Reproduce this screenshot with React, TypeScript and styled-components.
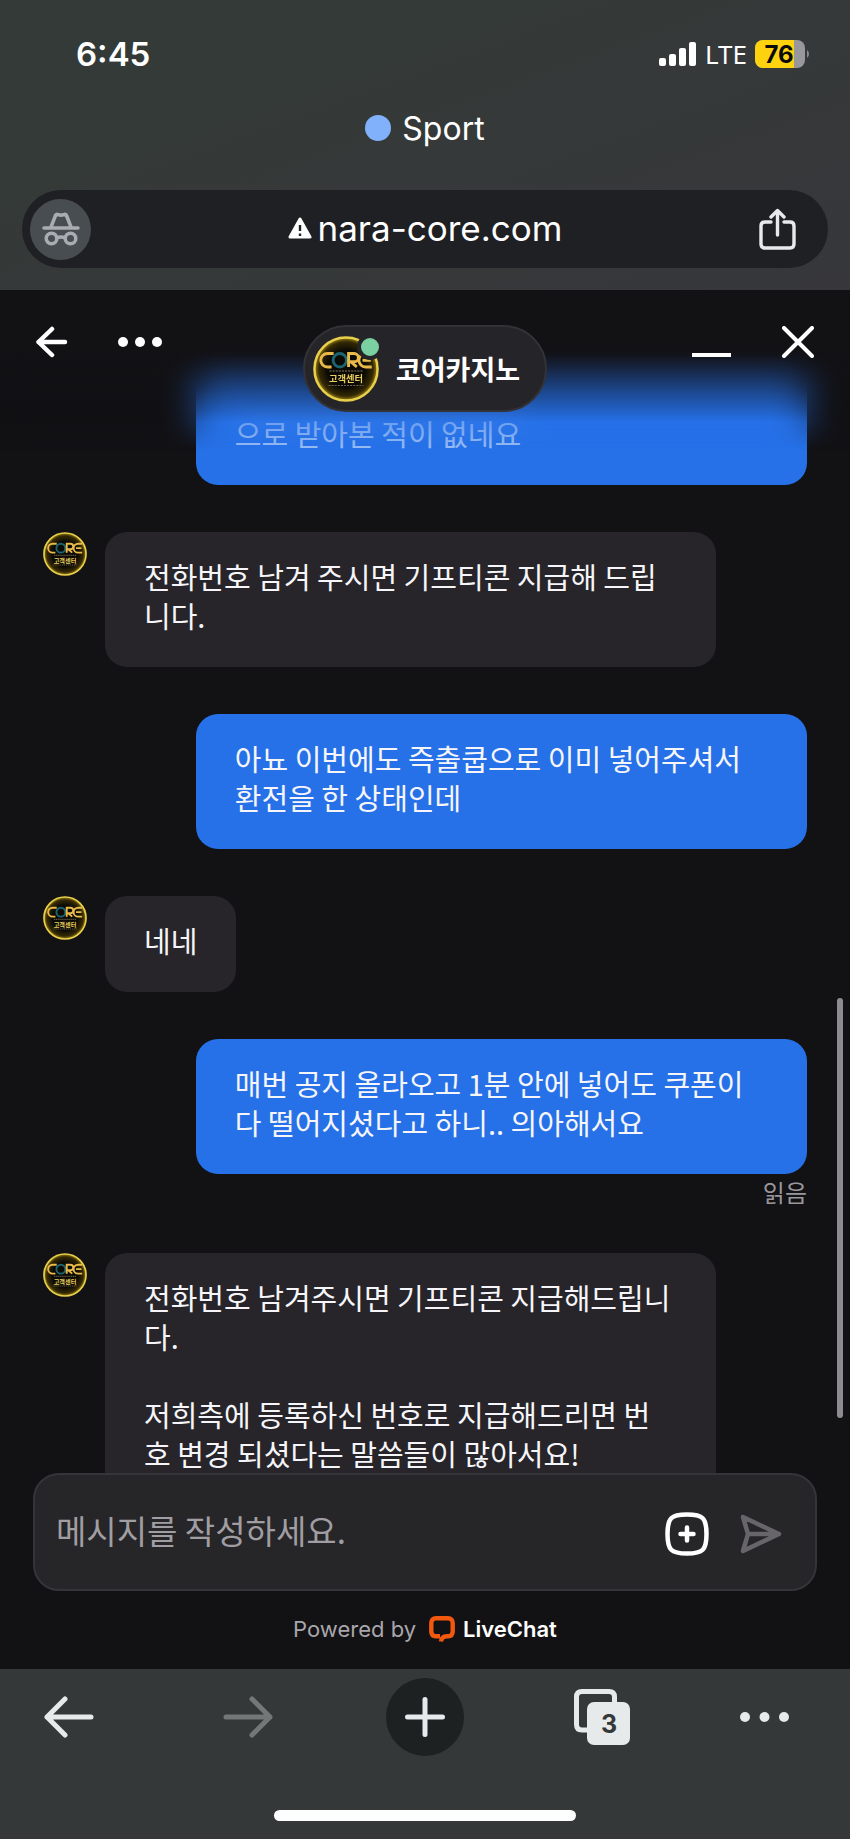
import React from "react";
import styled, { createGlobalStyle, css } from "styled-components";

const GlobalStyle = createGlobalStyle`
  *, *::before, *::after { box-sizing: border-box; }
  html, body { margin: 0; height: 100%; background: #343838; }
  #root { height: 100%; }
  body {
    font-family: Inter, "Noto Sans CJK KR", sans-serif;
    color: #fff;
    overflow: hidden;
  }
  button { border: 0; padding: 0; margin: 0; background: none; color: inherit; font: inherit; cursor: pointer; }
  a { color: inherit; text-decoration: none; }
  svg { display: block; }
`;

const Screen = styled.div`
  display: flex;
  flex-direction: column;
  min-height: 100%;
  height: 100vh;
`;

const BrowserTop = styled.header`
  flex: none;
  height: 290px;
  padding: 0 22px;
  display: flex;
  flex-direction: column;
  background: linear-gradient(160deg, #343a38 30%, #37373b 100%);
`;

const StatusBar = styled.div`
  display: flex;
  justify-content: space-between;
  align-items: center;
  height: 68px;
  margin-top: 20px;
  padding: 0 18px 0 54px;
`;

const Clock = styled.time`
  font-size: 33px;
  font-weight: 600;
  line-height: 40px;
`;

const StatusRight = styled.div`
  display: flex;
  align-items: center;
  gap: 8px;
`;

const Network = styled.span`
  font-family: "Noto Sans", sans-serif;
  font-size: 26px;
  line-height: 32px;
`;

const TabGroup = styled.div`
  display: flex;
  align-items: center;
  justify-content: center;
  gap: 11px;
  margin-top: 20px;
  height: 40px;
  font-size: 32px;
`;

const GroupDot = styled.span`
  width: 26px;
  height: 26px;
  border-radius: 50%;
  background: #82b1fc;
`;

const AddressBar = styled.div`
  display: flex;
  align-items: center;
  justify-content: space-between;
  margin-top: 42px;
  height: 78px;
  padding: 0 32px 0 8px;
  border-radius: 39px;
  background: #1f2024;
`;

const Incognito = styled.button`
  display: grid;
  place-items: center;
  width: 61px;
  height: 61px;
  border-radius: 50%;
  background: #484d51;
`;

const Address = styled.button`
  display: flex;
  align-items: center;
  gap: 6px;
  padding-bottom: 2px;
  font-size: 35px;
  line-height: 42px;
`;

const Chat = styled.main`
  position: relative;
  flex: 1;
  min-height: 0;
  display: flex;
  flex-direction: column;
  background: #121114;
`;

const ChatHeader = styled.div`
  position: absolute;
  z-index: 2;
  top: 0;
  left: 0;
  right: 0;
  display: grid;
  grid-template-columns: 1fr auto 1fr;
  align-items: start;
  padding: 35px 36px 0;
`;

const HeaderActions = styled.div<{ $end?: boolean }>`
  display: flex;
  align-items: center;
  justify-content: ${(p) => (p.$end ? "flex-end" : "flex-start")};
  gap: ${(p) => (p.$end ? "51px" : "50px")};
  height: 34px;
`;

const AgentPill = styled.div`
  display: flex;
  align-items: center;
  gap: 17px;
  height: 87px;
  padding: 0 25px 0 8px;
  border: 2px solid #333236;
  border-radius: 44px;
  background: #252428;
  font-family: "Noto Sans CJK KR", sans-serif;
  font-size: 27px;
  font-weight: 700;
  line-height: 40px;
`;

const AvatarWrap = styled.div`
  position: relative;
  flex: none;
`;

const Presence = styled.span`
  position: absolute;
  top: -2px;
  right: -4px;
  width: 26px;
  height: 26px;
  border: 4px solid #252428;
  border-radius: 50%;
  background: #7ad0a0;
`;

const Feed = styled.div`
  flex: 1;
  min-height: 0;
  overflow: hidden;
  display: flex;
  flex-direction: column;
  gap: 47px;
  padding: 60px 43px 0;
`;

const FadeTop = styled.div`
  position: absolute;
  z-index: 1;
  top: 0;
  left: 0;
  right: 0;
  height: 190px;
  backdrop-filter: blur(18px);
  mask-image: linear-gradient(#000 0 96px, transparent 160px);
`;

const FadeShade = styled.div`
  position: absolute;
  z-index: 1;
  top: 0;
  left: 0;
  right: 0;
  height: 132px;
  background: linear-gradient(#121114 0 60px, transparent);
`;

const Row = styled.div<{ $mine?: boolean }>`
  flex: none;
  display: flex;
  flex-direction: ${(p) => (p.$mine ? "column" : "row")};
  align-items: ${(p) => (p.$mine ? "flex-end" : "flex-start")};
  gap: ${(p) => (p.$mine ? "0" : "18px")};
`;

const Bubble = styled.p<{ $mine?: boolean; $wide?: boolean; $faded?: boolean }>`
  margin: 0;
  max-width: 80%;
  ${(p) => p.$wide && css`width: 80%;`}
  padding: 25px 39px 32px;
  border-radius: 22px;
  background: ${(p) => (p.$mine ? "#2671e8" : "#272529")};
  color: ${(p) => (p.$faded ? "rgba(255, 255, 255, 0.55)" : "#f6f6fa")};
  font-family: "Noto Sans CJK KR", sans-serif;
  font-size: 29px;
  font-weight: 400;
  line-height: 39px;
  white-space: pre-wrap;
  word-break: break-all;
`;

const ReadMark = styled.span`
  height: 32px;
  font-family: "Noto Sans CJK KR", sans-serif;
  font-size: 24px;
  line-height: 36px;
  color: #99979c;
`;

const ScrollThumb = styled.div`
  position: absolute;
  z-index: 2;
  top: 708px;
  right: 7px;
  width: 6px;
  height: 420px;
  border-radius: 3px;
  background: #8d8b90;
`;

const Composer = styled.form`
  flex: none;
  display: flex;
  align-items: center;
  gap: 31px;
  height: 118px;
  margin: 0 33px;
  padding: 3px 33px 0 21px;
  border: 2px solid #353438;
  border-radius: 26px;
  background: #262528;
`;

const MessageInput = styled.input`
  flex: 1;
  min-width: 0;
  height: 60px;
  border: 0;
  padding: 0 0 8px;
  outline: none;
  background: transparent;
  color: #fff;
  font-family: "Noto Sans CJK KR", sans-serif;
  font-size: 33px;
  &::placeholder { color: #a09ea2; opacity: 1; }
`;

const Powered = styled.footer`
  flex: none;
  display: flex;
  align-items: center;
  justify-content: center;
  gap: 13px;
  height: 78px;
  padding-bottom: 2px;
  font-size: 22px;
  color: #a9a7ab;
`;

const Brand = styled.a`
  display: flex;
  align-items: center;
  gap: 8px;
  font-weight: 600;
  color: #fff;
`;

const BrowserNav = styled.nav`
  flex: none;
  height: 170px;
  display: flex;
  flex-direction: column;
  align-items: center;
  background: #343838;
`;

const NavButtons = styled.div`
  align-self: stretch;
  display: grid;
  grid-template-columns: 1fr auto 1fr;
  align-items: center;
  height: 96px;
  padding: 0 44px;
`;

const NavSide = styled.div<{ $end?: boolean }>`
  display: flex;
  align-items: center;
  justify-content: space-between;
  padding: ${(p) => (p.$end ? "0 17px 0 110px" : "0 113px 0 0")};
`;

const NavButton = styled.button<{ $dim?: boolean }>`
  display: grid;
  place-items: center;
  color: ${(p) => (p.$dim ? "#737777" : "#e7eaeb")};
`;

const NewTab = styled(NavButton)`
  width: 78px;
  height: 78px;
  border-radius: 50%;
  background: #1d2122;
`;

const HomeIndicator = styled.div`
  width: 302px;
  height: 11px;
  margin-top: 45px;
  border-radius: 6px;
  background: #fdfefe;
`;

function Avatar({ size }: { size: number }) {
  const id = `glow${size}`;
  return (
    <svg width={size} height={size} viewBox="0 0 64 64" aria-label="CORE 고객센터" role="img">
      <defs>
        <radialGradient id={id}>
          <stop offset="0.6" stopColor="#0c0a04" />
          <stop offset="0.86" stopColor="#352903" />
          <stop offset="1" stopColor="#a08818" />
        </radialGradient>
      </defs>
      <circle cx="32" cy="32" r="30.6" fill={`url(#${id})`} stroke="#e8d04c" strokeWidth="2.4" />
      <g fill="none" strokeWidth="2.8">
        <path d="M20 17h-6a6.500 6.500 0 0 0 0 13H18" stroke="#e9b94a" />
        <circle cx="26" cy="23.500" r="6.500" stroke="#1b6470" />
        <path d="M34.500 30V17H40a4 4 0 0 1 0 8H36.500l6 5" stroke="#e9b94a" />
        <path d="M57 17h-6a6.500 6.500 0 0 0 0 13h6M48 23.500h8" stroke="#e9b94a" />
      </g>
      <path d="M16 34h33" stroke="#5c5644" strokeWidth="1.500" strokeDasharray="2 1" />
      <text x="32" y="45" textAnchor="middle" fontSize="9" fontWeight="700" fill="#e8cf5e" fontFamily="Noto Sans CJK KR, sans-serif">고객센터</text>
      <path d="M15 48h34" stroke="#6b6450" strokeWidth="1.200" strokeDasharray="2 1" />
    </svg>
  );
}

const stroke = { fill: "none", stroke: "currentColor", strokeLinecap: "round", strokeLinejoin: "round" } as const;

function Dots({ width, r }: { width: number; r: number }) {
  return (
    <svg width={width} height={r * 2} fill="currentColor">
      <circle cx={r} cy={r} r={r} />
      <circle cx={width / 2} cy={r} r={r} />
      <circle cx={width - r} cy={r} r={r} />
    </svg>
  );
}

type Message = { text: string; mine?: boolean; short?: boolean; faded?: boolean; read?: boolean };

const messages: Message[] = [
  { mine: true, faded: true, text: "\n으로 받아본 적이 없네요" },
  { text: "전화번호 남겨 주시면 기프티콘 지급해 드립\n니다." },
  { mine: true, text: "아뇨 이번에도 즉출쿱으로 이미 넣어주셔서\n환전을 한 상태인데" },
  { short: true, text: "네네" },
  { mine: true, read: true, text: "매번 공지 올라오고 1분 안에 넣어도 쿠폰이\n다 떨어지셨다고 하니.. 의아해서요" },
  { text: "전화번호 남겨주시면 기프티콘 지급해드립니\n다.\n\n저희측에 등록하신 번호로 지급해드리면 번\n호 변경 되셨다는 말씀들이 많아서요!" },
];

export default function App() {
  return (
    <Screen>
      <GlobalStyle />
      <BrowserTop>
        <StatusBar>
          <Clock>6:45</Clock>
          <StatusRight>
            <svg width="38" height="26" fill="#fff" aria-hidden="true">
              <rect x="0" y="17" width="7" height="8" rx="2" />
              <rect x="10" y="13" width="7" height="12" rx="2" />
              <rect x="20" y="7" width="7" height="18" rx="2" />
              <rect x="30" y="1" width="7" height="24" rx="2" />
            </svg>
            <Network>LTE</Network>
            <svg width="55" height="28" role="img" aria-label="76%">
              <defs>
                <clipPath id="cell"><rect width="50" height="28" rx="8" /></clipPath>
              </defs>
              <g clipPath="url(#cell)">
                <rect width="50" height="28" fill="#98989c" />
                <rect width="39" height="28" fill="#fdd20f" />
              </g>
              <path d="M52 10a5 5 0 0 1 0 8z" fill="#8b8d8e" />
              <text x="24" y="23" textAnchor="middle" fontSize="24" fontWeight="700" fill="#0a0a0a">76</text>
            </svg>
          </StatusRight>
        </StatusBar>
        <TabGroup><GroupDot />Sport</TabGroup>
        <AddressBar>
          <Incognito aria-label="Incognito">
            <svg width="38" height="34" viewBox="0 0 38 34" {...stroke} stroke="#a9adb3" strokeWidth="3.500">
              <path d="M2 16h34M9 15l4.500-11.500q.5-1.500 2-1l3.500.8 3.500-.8q1.500-.5 2 1L29 15" />
              <circle cx="9.500" cy="26.500" r="5.300" />
              <circle cx="28.500" cy="26.500" r="5.300" />
              <path d="M15 26q4-2 8 0" />
            </svg>
          </Incognito>
          <Address>
            <svg width="24" height="22" viewBox="0 0 24 22" aria-hidden="true">
              <path d="M12 2 22 20H2z" fill="#fff" stroke="#fff" strokeWidth="3" strokeLinejoin="round" />
              <path d="M12 8v6M12 16.500v2.500" stroke="#1f2024" strokeWidth="2.400" />
            </svg>
            nara-core.com
          </Address>
          <NavButton aria-label="Share">
            <svg width="37" height="42" viewBox="0 0 37 42" {...stroke} strokeWidth="3.400">
              <path d="M12 14H6q-4 0-4 4v18q0 4 4 4h25q4 0 4-4V18q0-4-4-4h-6M18.500 27V2.500M12 9l6.500-6.500L25 9" />
            </svg>
          </NavButton>
        </AddressBar>
      </BrowserTop>

      <Chat>
        <ChatHeader>
          <HeaderActions>
            <button aria-label="Back">
              <svg width="32" height="32" {...stroke} strokeWidth="4.500"><path d="M29 16H2.500M16 3 2.500 16 16 29" /></svg>
            </button>
            <button aria-label="Menu"><Dots width={44} r={5} /></button>
          </HeaderActions>
          <AgentPill>
            <AvatarWrap>
              <Avatar size={66} />
              <Presence />
            </AvatarWrap>
            코어카지노
          </AgentPill>
          <HeaderActions $end>
            <button aria-label="Minimize">
              <svg width="40" height="32" {...stroke} strokeWidth="4" strokeLinecap="square"><path d="M3 29h35" /></svg>
            </button>
            <button aria-label="Close">
              <svg width="32" height="32" {...stroke} strokeWidth="4"><path d="m2 2 28 28M30 2 2 30" /></svg>
            </button>
          </HeaderActions>
        </ChatHeader>
        <FadeTop />
        <FadeShade />
        <Feed>
          {messages.map((m, i) => (
            <Row key={i} $mine={m.mine}>
              {!m.mine && <Avatar size={44} />}
              <Bubble $mine={m.mine} $wide={!m.short} $faded={m.faded}>{m.text}</Bubble>
              {m.read && <ReadMark>읽음</ReadMark>}
            </Row>
          ))}
        </Feed>
        <ScrollThumb />
        <Composer onSubmit={(e) => e.preventDefault()}>
          <MessageInput aria-label="메시지" placeholder="메시지를 작성하세요." />
          <button type="button" aria-label="Add">
            <svg width="44" height="44" {...stroke} strokeWidth="4.500">
              <path d="M22 2.500C38 2.500 41.500 6 41.500 22S38 41.500 22 41.500 2.500 38 2.500 22 6 2.500 22 2.500z" />
              <path d="M22 15.500v13M15.500 22h13" />
            </svg>
          </button>
          <button type="submit" aria-label="Send">
            <svg width="42" height="40" {...stroke} stroke="#67656a" strokeWidth="4.500">
              <path d="M3 3 39 20 3 37 8 20zM8 20h30" />
            </svg>
          </button>
        </Composer>
        <Powered>
          Powered by
          <Brand href="#livechat">
            <svg width="26" height="27" viewBox="0 0 26 27" aria-hidden="true">
              <path d="M12 25.500Q12.500 20.500 18 20.300h1q4.700-.3 4.700-4.800V7q0-4.700-4.700-4.700H7Q2.300 2.300 2.300 7v8.500q0 4.500 4.700 4.800h4" fill="none" stroke="#f2590f" strokeWidth="4.400" />
            </svg>
            LiveChat
          </Brand>
        </Powered>
      </Chat>

      <BrowserNav>
        <NavButtons>
          <NavSide>
            <NavButton aria-label="Back">
              <svg width="51" height="42" {...stroke} strokeWidth="5"><path d="M47 21H3M21 3 3 21l18 18" /></svg>
            </NavButton>
            <NavButton $dim aria-label="Forward">
              <svg width="51" height="42" {...stroke} strokeWidth="5"><path d="M4 21h44M30 3l18 18-18 18" /></svg>
            </NavButton>
          </NavSide>
          <NewTab aria-label="New tab">
            <svg width="40" height="40" {...stroke} strokeWidth="5"><path d="M20 2.500v35M2.500 20h35" /></svg>
          </NewTab>
          <NavSide $end>
            <NavButton aria-label="3 tabs">
              <svg width="56" height="56" viewBox="0 0 56 56">
                <path d="M13 41H8q-5.500 0-5.500-5.500V8q0-5.500 5.500-5.500h27q5.500 0 5.500 5.500v5" fill="none" stroke="currentColor" strokeWidth="5" />
                <rect x="13" y="13" width="43" height="43" rx="7" fill="currentColor" />
                <text x="35" y="44" textAnchor="middle" fontSize="25" fontWeight="700" fill="#343838">3</text>
              </svg>
            </NavButton>
            <NavButton aria-label="More"><Dots width={49} r={5} /></NavButton>
          </NavSide>
        </NavButtons>
        <HomeIndicator />
      </BrowserNav>
    </Screen>
  );
}
